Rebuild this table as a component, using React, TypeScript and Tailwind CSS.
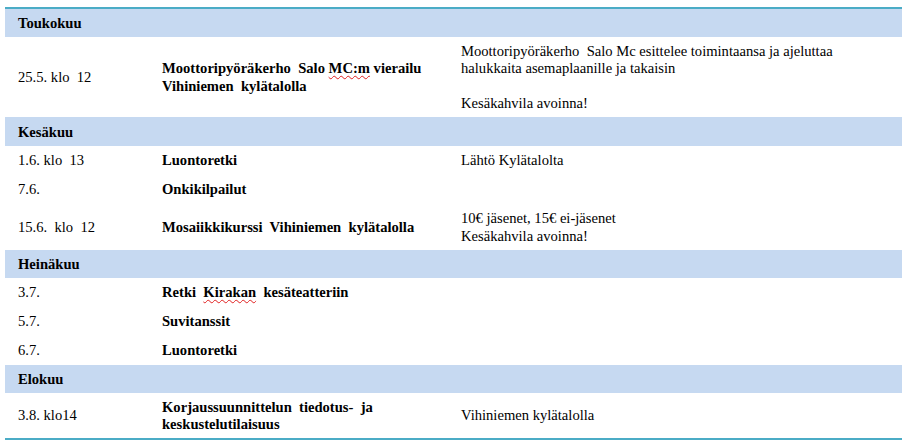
import React from 'react';

type Row = {
  date: string;
  title: React.ReactNode;
  info?: React.ReactNode;
  h: string;
};

type Month = {
  name: string;
  h: string;
  rows: Row[];
};

const squiggle = 'underline decoration-wavy decoration-[#e02020] decoration-1 underline-offset-2';

const months: Month[] = [
  {
    name: 'Toukokuu',
    h: 'h-[28px]',
    rows: [
      {
        date: '25.5. klo  12',
        title: (
          <>
            Moottoripyöräkerho  Salo <span className={squiggle}>MC:m</span> vierailu
            {'\n'}Vihiniemen  kylätalolla
          </>
        ),
        info: 'Moottoripyöräkerho  Salo Mc esittelee toimintaansa ja ajeluttaa\nhalukkaita asemaplaanille ja takaisin\n\nKesäkahvila avoinna!',
        h: 'h-[80px]',
      },
    ],
  },
  {
    name: 'Kesäkuu',
    h: 'h-[29px]',
    rows: [
      { date: '1.6. klo  13', title: 'Luontoretki', info: 'Lähtö Kylätalolta', h: 'h-[29px]' },
      { date: '7.6.', title: 'Onkikilpailut', h: 'h-[29px]' },
      {
        date: '15.6.  klo  12',
        title: 'Mosaiikkikurssi  Vihiniemen  kylätalolla',
        info: '10€ jäsenet, 15€ ei-jäsenet\nKesäkahvila avoinna!',
        h: 'h-[46px]',
      },
    ],
  },
  {
    name: 'Heinäkuu',
    h: 'h-[28px]',
    rows: [
      {
        date: '3.7.',
        title: (
          <>
            Retki  <span className={squiggle}>Kirakan</span>  kesäteatteriin
          </>
        ),
        h: 'h-[29px]',
      },
      { date: '5.7.', title: 'Suvitanssit', h: 'h-[29px]' },
      { date: '6.7.', title: 'Luontoretki', h: 'h-[29px]' },
    ],
  },
  {
    name: 'Elokuu',
    h: 'h-[28px]',
    rows: [
      {
        date: '3.8. klo14',
        title: 'Korjaussuunnittelun  tiedotus-  ja\nkeskustelutilaisuus',
        info: 'Vihiniemen kylätalolla',
        h: 'h-[45px]',
      },
    ],
  },
];

export default function App() {
  return (
    <div className="w-[909px] h-[445px] bg-white pt-[7px] pl-[5px] text-black text-[14.6px] leading-[17.5px] font-['Liberation_Serif',serif]">
      <div className="w-[897px] border-y-2 border-[#4bacc6]">
        {months.map((m) => (
          <div key={m.name}>
            <div className={`${m.h} bg-[#c6d9f1] flex items-center pl-[13px] pt-[2px] font-bold`}>{m.name}</div>
            {m.rows.map((r) => (
              <div key={r.date} className={`${r.h} grid grid-cols-[144px_299px_1fr] items-center pt-[1px] whitespace-pre-wrap`}>
                <div className="pl-[13px]">{r.date}</div>
                <div className="pl-[13px] font-bold">{r.title}</div>
                <div className="pl-[13px]">{r.info}</div>
              </div>
            ))}
          </div>
        ))}
      </div>
    </div>
  );
}
